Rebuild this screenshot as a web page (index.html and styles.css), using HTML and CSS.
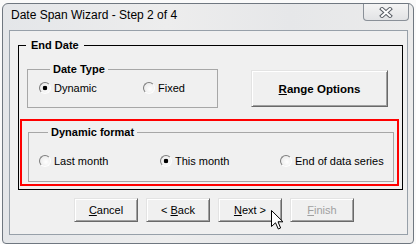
FILE: index.html
```html
<!DOCTYPE html>
<html>
<head>
	<title>Date Span Wizard</title>
	<meta charset="utf-8">
	<link rel="stylesheet" href="styles.css">
</head>
<body>
	<div class="window">
		<div class="titlebar">
			<span class="title">Date Span Wizard - Step 2 of 4</span>
			<span class="close">
				<svg width="14" height="11" viewBox="0 0 14 11">
					<path d="M3 2 L11 9 M11 2 L3 9" stroke="#5a5f66" stroke-width="4" stroke-linecap="square"/>
					<path d="M3 2 L11 9 M11 2 L3 9" stroke="#fff" stroke-width="2" stroke-linecap="square"/>
				</svg>
			</span>
		</div>
		<div class="client">
			<fieldset class="end-date">
				<legend>End Date</legend>
				<div class="top-row">
					<fieldset class="group date-type">
						<legend>Date Type</legend>
						<div class="options">
							<span class="radio on">Dynamic</span>
							<span class="radio">Fixed</span>
						</div>
					</fieldset>
					<button class="btn range"><u>R</u>ange Options</button>
				</div>
				<div class="highlight">
					<fieldset class="group dyn-format">
						<legend>Dynamic format</legend>
						<div class="options">
							<span class="radio">Last month</span>
							<span class="radio on">This month</span>
							<span class="radio">End of data series</span>
						</div>
					</fieldset>
				</div>
			</fieldset>
			<div class="buttons">
				<button class="btn"><u>C</u>ancel</button>
				<button class="btn">&lt; <u>B</u>ack</button>
				<button class="btn"><u>N</u>ext &gt;</button>
				<button class="btn off"><u>F</u>inish</button>
			</div>
		</div>
	</div>
	<svg class="cursor" width="13" height="20" viewBox="0 0 13 20">
		<path d="M0.5 0.5 L0.5 16.5 L4.5 12.8 L7.3 19 L9.6 18 L7 11.8 L12 11.8 Z" fill="#fff" stroke="#000" stroke-width="1"/>
	</svg>
</body>
</html>
```

FILE: styles.css
```css
*{
	margin:0;
	padding:0;
}
body{
	background:#fafafa;
	font-family:"Liberation Sans", Arial, sans-serif;
	font-size:11px;
	color:#000;
}
.window{
	margin:3px 2px 0 2px;
	height:241px;
	box-sizing:border-box;
	border:1px solid #6f7780;
	border-radius:6px 6px 4px 4px;
	background:linear-gradient(90deg, #e4e6e9, #ededed 40%, #e6e7e9 70%, #ebebeb);
}
.titlebar{
	display:flex;
	justify-content:space-between;
	align-items:flex-start;
	height:26px;
	padding:0 4px 0 8px;
}
.title{
	font-size:12px;
	line-height:15px;
	padding-top:4px;
}
.close{
	display:flex;
	align-items:center;
	justify-content:center;
	width:46px;
	height:17px;
	box-sizing:border-box;
	border:1px solid #8a9098;
	border-top:none;
	border-radius:0 0 4px 4px;
	background:linear-gradient(#f4f4f4, #e2e3e5);
}
.client{
	margin:0 5px 0 6px;
	height:205px;
	box-sizing:border-box;
	border:1px solid #97a0a9;
	background:#f0f0f0;
	overflow:hidden;
}
fieldset{
	min-width:0;
}
legend{
	font-weight:bold;
	line-height:14px;
}
.end-date{
	margin:7px 4px 0 8px;
	border:1px solid #000;
	padding:0 0 3px 0;
}
.end-date > legend{
	margin-left:7px;
	padding:0 5px;
}
.top-row{
	display:flex;
	align-items:flex-start;
	margin-top:10px;
}
.group{
	border:1px solid #a7a7a7;
}
.group legend{
	padding:0 3px;
}
.date-type{
	width:191px;
	box-sizing:border-box;
	margin-left:8px;
	padding:5px 0 12px 11px;
}
.date-type legend{
	margin-left:11px;
}
.date-type .options{
	display:grid;
	grid-template-columns:104px 1fr;
}
.radio{
	display:flex;
	align-items:center;
	line-height:14px;
}
.radio::before{
	content:"";
	width:12px;
	height:12px;
	box-sizing:border-box;
	border-radius:50%;
	border:1px solid;
	border-color:#7d7d7d #fdfdfd #fdfdfd #7d7d7d;
	background:radial-gradient(circle at 60% 60%, #fff, #e4e4e4);
	margin-right:3px;
}
.radio.on::before{
	background:radial-gradient(circle, #000 0 2px, transparent 2.6px), radial-gradient(circle at 60% 60%, #fff, #e4e4e4);
}
.btn{
	font-family:"Liberation Sans", Arial, sans-serif;
	font-size:11px;
	color:#000;
	background:#f0f0f0;
	border:1px solid;
	border-color:#e3e3e3 #696969 #696969 #e3e3e3;
	box-shadow:inset 1px 1px #fff, inset -1px -1px #a0a0a0;
	box-sizing:border-box;
}
.range{
	margin:8px 0 0 33px;
	width:137px;
	height:37px;
	font-weight:bold;
	font-size:11.5px;
}
.highlight{
	margin:11px 0 0 1px;
	width:379px;
	height:67px;
	box-sizing:border-box;
	border:2px solid #f00;
	padding:4px 0 0 6px;
}
.dyn-format{
	width:366px;
	box-sizing:border-box;
	padding:15px 0 13px 10px;
}
.dyn-format legend{
	margin-left:9px;
}
.dyn-format .options{
	display:grid;
	grid-template-columns:121px 120px 1fr;
}
.buttons{
	display:flex;
	gap:8px;
	margin:8px 0 0 64px;
}
.buttons .btn{
	width:64px;
	height:24px;
}
.btn.off{
	color:#a0a0a0;
}
.cursor{
	position:absolute;
	left:271px;
	top:210px;
}
```
